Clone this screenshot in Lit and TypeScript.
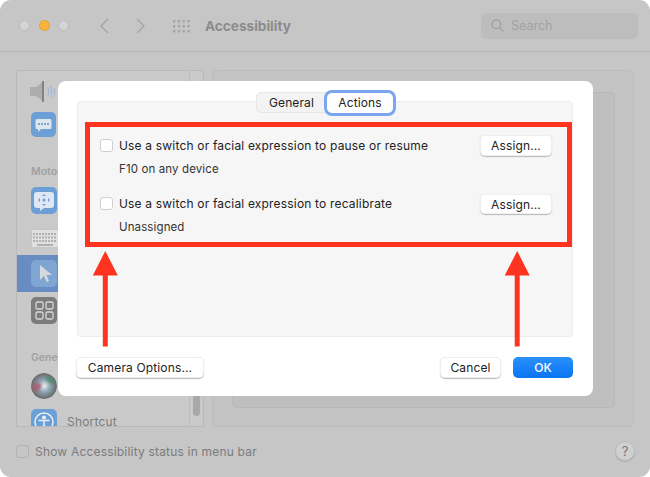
import { LitElement, html, css, svg } from "lit";
import { customElement } from "lit/decorators.js";

const arrow = (x: number) => svg`<path d="M${x - 12.5} 275.5 L${x} 251 L${x + 12.5} 275.5 H${x + 2.5} V346.500 H${x - 2.5} V275.5 Z" fill="#ff3420"/>`;

@customElement("app-root")
export class AppRoot extends LitElement {
  static styles = css`
    :host { display: block; width: 650px; height: 477px; background: #fff; font-family: "Inter", "Liberation Sans", sans-serif; font-size: 12px; color: #222; overflow: hidden; position: relative; }
    .window { width: 650px; height: 477px; background: #c6c6c7; border-radius: 11px; display: flex; flex-direction: column; overflow: hidden; color: #7c7c7c; }
    .titlebar { height: 51px; flex: none; border-bottom: 1px solid #b8b8b9; box-sizing: content-box; display: flex; align-items: center; padding-left: 19px; padding-right: 12px; }
    .lights { display: flex; gap: 8.5px; width: 81px; flex: none; }
    .light { width: 11px; height: 11px; border-radius: 50%; background: #d4d3d6; border: 0.5px solid #bbb; box-sizing: border-box; }
    .light.on { background: #f9b437; border-color: #e0a030; }
    .nav { display: flex; align-items: center; flex: none; }
    .title { font-weight: 700; font-size: 13.6px; color: #8b8b8c; margin-left: 15px; }
    .search { margin-left: auto; width: 157px; height: 26px; background: #bdbdbe; border-radius: 5px; display: flex; align-items: center; gap: 7px; padding-left: 10px; box-sizing: border-box; color: #a2a2a3; font-size: 12.5px; }
    .content { flex: 1; display: flex; gap: 8px; padding: 18px 16px 0 16px; min-height: 0; }
    .sidebar { width: 188px; height: 357px; box-sizing: border-box; border: 1px solid #b9b9ba; background: #c9c9ca; display: flex; overflow: hidden; }
    .list { flex: 1; min-width: 0; display: flex; flex-direction: column; }
    .track { width: 14px; flex: none; border-left: 1px solid #bcbcbd; display: flex; flex-direction: column; justify-content: flex-end; align-items: center; padding-bottom: 10px; box-sizing: border-box; }
    .thumb { width: 7px; height: 22px; background: #a9a9aa; border-radius: 4px; }
    .item { display: flex; align-items: center; gap: 10px; padding-left: 14px; flex: none; font-size: 12px; letter-spacing: .2px; color: #7c7c7c; }
    .item.sel { background: #6a8cc4; }
    .item.speaker { height: 41px; }
    .item.caps { height: 25px; }
    .item.voice { height: 27px; }
    .item.keys { height: 19px; margin-top: 15px; }
    .item.sel { height: 37px; margin-top: 7px; }
    .item.switch { height: 27px; margin-top: 5px; }
    .item.siri { height: 25px; }
    .item.shortcut { height: 17px; margin-top: 11px; align-items: flex-start; }
    .item.shortcut span { margin-top: 6.5px; line-height: 11px; }
    .ic { width: 25px; height: 25px; border-radius: 5px; background: #6c9fd6; flex: none; display: block; }
    .ic.tall { width: 26px; height: 27px; }
    .ic.plain { background: none; }
    .ic.sp { width: 28px; margin-left: -1px; }
    .ic.kb { width: 28px; height: 19px; }
    .ic.cur { background: #7fa5d2; }
    .ic.grid { background: #7c7c7d; }
    .ic.orb { width: 26px; height: 26px; }
    .orbart { filter: blur(1px); }
    .head { font-size: 10.5px; font-weight: 600; color: #a0a0a1; padding-left: 14px; flex: none; height: 22px; }
    .head.motor { margin-top: 28px; }
    .head.general { margin-top: 27px; }
    .main { width: 422px; height: 357px; box-sizing: border-box; border: 1px solid #bcbcbd; border-radius: 5px; background: #c3c3c4; padding: 21px 18px 18px 19px; }
    .inner { height: 100%; border: 1px solid #b8b8b9; border-radius: 4px; background: #bfbfc0; box-sizing: border-box; }
    .foot { flex: none; height: 50px; display: flex; align-items: center; padding: 0 15px 1px 16px; gap: 6px; font-size: 12px; color: #7c7c7c; letter-spacing: .19px; }
    .foot .check { background: #c6c6c7; border-color: #b2b2b3; }
    .help { margin-left: auto; width: 20px; height: 20px; border-radius: 50%; background: #d0d0d1; border: 1px solid #bcbcbd; box-sizing: border-box; display: flex; align-items: center; justify-content: center; color: #777; font-size: 13px; letter-spacing: 0; box-shadow: 0 1px 1px #aaa; }
    .check { width: 13px; height: 13px; flex: none; border: 1px solid #cfcfcf; border-radius: 3px; background: #fff; box-sizing: border-box; display: block; }

    .modal { position: absolute; left: 58px; top: 81px; width: 535px; height: 315px; background: #fff; border-radius: 8px; box-sizing: border-box; padding: 20px 20px 19px 19px; display: flex; flex-direction: column; color: #222; }
    .panel { height: 236px; flex: none; background: #f6f6f6; border: 1px solid #ececec; border-radius: 4px; box-sizing: border-box; position: relative; padding: 33px 20px 0 22px; display: flex; flex-direction: column; gap: 19px; }
    .tabs { position: absolute; top: -10px; left: 178px; display: flex; align-items: center; height: 21px; background: #f3f3f3; border: 1px solid #e6e6e6; border-radius: 5px; box-sizing: border-box; }
    .tab { font-size: 12px; letter-spacing: .12px; display: flex; align-items: center; justify-content: center; height: 19px; box-sizing: border-box; }
    .tab.g { width: 69px; }
    .tab.a { width: 66px; height: 20px; margin-left: 1px; background: #fff; border-radius: 5px; box-shadow: 0 0 0 3px #7ba7f0; }
    .row { display: flex; align-items: flex-start; height: 39px; }
    .row .check { margin-top: 4px; }
    .txt { margin-left: 6px; flex: 1; display: flex; flex-direction: column; gap: 9px; }
    .l1 { font-size: 12px; letter-spacing: .18px; line-height: 15px; margin-top: 3px; white-space: nowrap; }
    .l2 { font-size: 11.5px; letter-spacing: .12px; line-height: 14px; color: #333; }
    button { font: inherit; color: #222; height: 21px; padding: 0; border: none; background: #fff; border-radius: 5px; box-shadow: inset 0 0 0 .5px #ddd, 0 1px 1px #bbb; font-size: 12px; letter-spacing: .14px; display: block; flex: none; }
    .assign { width: 72px; }
    .assign.two { height: 20px; margin-top: 1px; }
    .btns { margin-top: 20px; display: flex; align-items: center; gap: 12px; margin-left: -1px; }
    .cam { width: 128px; margin-right: auto; }
    .cancel { width: 61px; }
    .ok { width: 60px; background: linear-gradient(#2a90fb, #0a74f2); color: #fff; font-weight: 500; box-shadow: none; }
    .overlay { position: absolute; left: 0; top: 0; pointer-events: none; }
  `;

  render() {
    return html`
      <div class="window">
        <div class="titlebar">
          <div class="lights"><span class="light"></span><span class="light on"></span><span class="light"></span></div>
          <div class="nav">
            <svg width="72" height="20" viewBox="0 0 72 20" fill="none" stroke="#a4a4a5" stroke-width="1.4">
              <path d="M8 3 L1 10 L8 17"/><path d="M37 3 L44 10 L37 17"/>
            </svg>
            <svg width="18" height="14" viewBox="0 0 18 14" fill="#a4a4a5">
              ${[0, 1, 2].flatMap((r) => [0, 1, 2, 3].map((c) => svg`<rect x="${c * 4.8 + 1}" y="${r * 5 + 1}" width="2.4" height="2.4" rx=".6"/>`))}
            </svg>
          </div>
          <div class="title">Accessibility</div>
          <div class="search">
            <svg width="13" height="13" viewBox="0 0 13 13" fill="none" stroke="#9e9e9f" stroke-width="1.2"><circle cx="5.3" cy="5.3" r="4.4"/><path d="M8.5 8.5 L12.4 12.4"/></svg>
            <span>Search</span>
          </div>
        </div>
        <div class="content">
          <div class="sidebar">
            <div class="list">
              <div class="item speaker">
                <svg class="ic plain sp" viewBox="0 0 28 25"><path d="M0 8h6l8-6v21l-8-6H0z" fill="#adadae"/><path d="M13 2v21" stroke="#777" stroke-width="1.6"/><path d="M18 8c1 3 1 6 0 9M21 6.500c1 4 1 8 0 12M24.500 9v7" stroke="#a3bbd6" stroke-width="1.500" fill="none"/></svg>
              </div>
              <div class="item caps">
                <svg class="ic" viewBox="0 0 25 25"><path d="M6 7h13a1.500 1.500 0 0 1 1.500 1.500v7A1.500 1.500 0 0 1 19 17h-9l-3 3v-3H6a1.500 1.500 0 0 1-1.500-1.500v-7A1.500 1.500 0 0 1 6 7z" fill="#dfe6ee"/><path d="M7 12h11" stroke="#7fa6d2" stroke-width="2" stroke-dasharray="2 1"/></svg>
              </div>
              <div class="head motor">Motor</div>
              <div class="item voice">
                <svg class="ic tall" viewBox="0 0 26 27"><path d="M6 5h14a3 3 0 0 1 3 3v10a3 3 0 0 1-3 3h-7l-4 3v-3H6a3 3 0 0 1-3-3V8a3 3 0 0 1 3-3z" fill="#dfe8f2"/><circle cx="13" cy="13" r="1.500" fill="#6c9fd6"/><path d="M13 7l2 2h-4zM13 19l2-2h-4zM7 13l2-2v4zM19 13l-2-2v4z" fill="#6c9fd6"/></svg>
              </div>
              <div class="item keys">
                <svg class="ic plain kb" viewBox="0 0 28 19"><rect width="28" height="19" rx="2" fill="#e0e0e1" stroke="#a8a8a9"/><path d="M2 5h24M2 8.500h24M2 12h24" stroke="#b0b0b1" stroke-width="2" stroke-dasharray="2 1"/><path d="M6 16h16" stroke="#b0b0b1" stroke-width="2"/></svg>
              </div>
              <div class="item sel">
                <svg class="ic tall cur" viewBox="0 0 26 27"><path d="M9 5v15l4-4 2.500 6 2.500-1-2.500-6h5.500z" fill="#d5d9de"/></svg>
              </div>
              <div class="item switch">
                <svg class="ic tall grid" viewBox="0 0 26 27" fill="none" stroke="#d8d8d8" stroke-width="1.300"><rect x="5" y="5" width="7" height="7" rx="1.500"/><rect x="15" y="5" width="7" height="7" rx="1.500"/><rect x="5" y="15" width="7" height="7" rx="1.500"/><rect x="15" y="15" width="7" height="7" rx="1.500"/></svg>
              </div>
              <div class="head general">General</div>
              <div class="item siri">
                <svg class="ic plain orb" viewBox="0 0 26 26"><defs><radialGradient id="s"><stop offset="0" stop-color="#eeeeee"/><stop offset=".45" stop-color="#8fa8b5"/><stop offset="1" stop-color="#666"/></radialGradient><clipPath id="c"><circle cx="13" cy="13" r="13"/></clipPath></defs><g clip-path="url(#c)"><circle cx="13" cy="13" r="13" fill="url(#s)"/><g class="orbart"><path d="M1 14c4-6 7-5 10-2-3 6-5 11-10 2z" fill="#b5566c" opacity=".75"/><path d="M14 3c5 0 10 3 11 7-4 2-9 0-11-7z" fill="#4f8a70" opacity=".75"/></g></g></svg>
              </div>
              <div class="item shortcut">
                <svg class="ic tall" viewBox="0 0 26 27" fill="none" stroke="#e6eef7" stroke-width="1.500"><circle cx="13" cy="13" r="9"/><circle cx="13" cy="8.500" r="1.300" fill="#e6eef7"/><path d="M7.500 11.500h11M13 12v4l-3 5M13 16l3 5"/></svg>
                <span>Shortcut</span>
              </div>
            </div>
            <div class="track"><div class="thumb"></div></div>
          </div>
          <div class="main"><div class="inner"></div></div>
        </div>
        <div class="foot">
          <span class="check"></span>
          <span>Show Accessibility status in menu bar</span>
          <span class="help">?</span>
        </div>
      </div>

      <div class="modal">
        <div class="panel">
          <div class="tabs">
            <div class="tab g">General</div>
            <div class="tab a">Actions</div>
          </div>
          <div class="row">
            <span class="check"></span>
            <div class="txt">
              <div class="l1">Use a switch or facial expression to pause or resume</div>
              <div class="l2">F10 on any device</div>
            </div>
            <button class="assign">Assign...</button>
          </div>
          <div class="row">
            <span class="check"></span>
            <div class="txt">
              <div class="l1">Use a switch or facial expression to recalibrate</div>
              <div class="l2">Unassigned</div>
            </div>
            <button class="assign two">Assign...</button>
          </div>
        </div>
        <div class="btns">
          <button class="cam">Camera Options...</button>
          <button class="cancel">Cancel</button>
          <button class="ok">OK</button>
        </div>
      </div>

      <svg class="overlay" width="650" height="477" viewBox="0 0 650 477">
        <rect x="87.500" y="124.500" width="482" height="120" fill="none" stroke="#ff3420" stroke-width="5"/>
        ${arrow(105.3)}
        ${arrow(517.2)}
      </svg>
    `;
  }
}
